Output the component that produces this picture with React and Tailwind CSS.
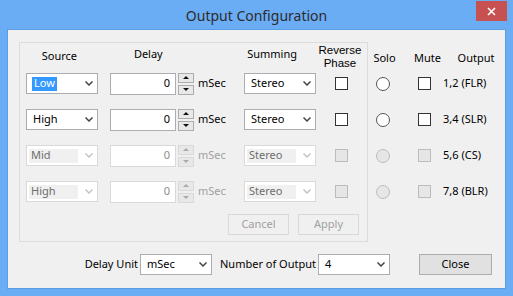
import React from "react";

const font = "font-['Noto_Sans',sans-serif]";

function Chevron({ disabled }) {
  return (
    <svg width="8" height="5" viewBox="0 0 8 5" className="shrink-0">
      <polyline
        points="0.5,0.5 4,4 7.5,0.5"
        fill="none"
        stroke={disabled ? "#c4c4c4" : "#444"}
        strokeWidth="1.5"
      />
    </svg>
  );
}

function Select({ value, width = "w-[72px]", disabled, selected }) {
  return (
    <div
      className={`${width} h-[21px] flex items-center bg-white border pr-[4px] ${
        disabled ? "border-[#d9d9d9]" : "border-[#abadb3]"
      }`}
    >
      <div className="flex-1 flex items-center pl-[2px] h-full">
        {disabled ? (
          <span className="w-[49px] h-[14px] bg-[#f0f0f0] flex items-center pl-[2px] text-[#6d6d6d]">
            {value}
          </span>
        ) : selected ? (
          <span className="h-[14px] bg-[#3399ff] text-white flex items-center px-[2px] ml-[3px]">
            {value}
          </span>
        ) : (
          <span className="pl-[4px]">{value}</span>
        )}
      </div>
      <Chevron disabled={disabled} />
    </div>
  );
}

function Spin({ disabled }) {
  const b = disabled ? "border-[#d9d9d9]" : "border-[#acacac]";
  const c = disabled ? "#a9a9a9" : "#111";
  return (
    <div className="w-[16px] h-[22px] flex flex-col justify-between">
      <div className={`h-[10px] border ${b} bg-[#e8e8e8] flex items-center justify-center`}>
        <svg width="6" height="3" viewBox="0 0 6 3">
          <polygon points="0,3 3,0 6,3" fill={c} />
        </svg>
      </div>
      <div className={`h-[10px] border ${b} bg-[#e8e8e8] flex items-center justify-center`}>
        <svg width="6" height="3" viewBox="0 0 6 3">
          <polygon points="0,0 6,0 3,3" fill={c} />
        </svg>
      </div>
    </div>
  );
}

function Check({ disabled }) {
  return (
    <div
      className={`w-[13px] h-[13px] border ${
        disabled ? "border-[#bcbcbc] bg-[#e6e6e6]" : "border-[#333] bg-white"
      }`}
    />
  );
}

function Radio({ disabled }) {
  return (
    <div
      className={`w-[14px] h-[14px] rounded-full border ${
        disabled ? "border-[#bcbcbc] bg-[#e6e6e6]" : "border-[#555] bg-white"
      }`}
    />
  );
}

const rows = [
  { source: "Low", out: "1,2 (FLR)", selected: true },
  { source: "High", out: "3,4 (SLR)" },
  { source: "Mid", out: "5,6 (CS)", disabled: true },
  { source: "High", out: "7,8 (BLR)", disabled: true },
];

export default function App() {
  return (
    <div className={`w-[513px] h-[296px] bg-[#6badf5] flex flex-col px-[7px] ${font} text-[11px] text-black`}>
      {/* title bar */}
      <div className="h-[29px] relative flex items-center justify-center">
        <span className="text-[14px] text-[#2b2b2b] pt-[2px]">Output Configuration</span>
        <div className="absolute right-[-1px] top-[1px] w-[31px] h-[20px] bg-[#c75050] flex items-center justify-center">
          <svg width="9" height="9" viewBox="0 0 9 9">
            <path d="M1 1 L8 8 M8 1 L1 8" stroke="white" strokeWidth="1.6" />
          </svg>
        </div>
      </div>

      {/* client */}
      <div className="h-[260px] border border-[#5b9de5] bg-[#f0f0f0] flex flex-col">
        <div className="flex mt-[12px] ml-[11px]">
          {/* group box */}
          <div className="w-[349px] h-[200px] border border-[#dcdcdc] flex flex-col">
            <div className="h-[30px] flex items-start pl-[6px]">
              <div className="w-[72px] text-center pt-[5px] pr-[3px]">Source</div>
              <div className="w-[96px] text-center pt-[3px] pl-[12px]">Delay</div>
              <div className="w-[50px]" />
              <div className="w-[72px] text-center pt-[3px]">Summing</div>
              <div className="w-[62px] flex flex-col items-center pl-[6px] pt-[1px] font-['Liberation_Sans',sans-serif] text-[11.5px]">
                <span className="leading-[13px]">Reverse</span>
                <span className="leading-[13px]">Phase</span>
              </div>
            </div>
            <div className="flex flex-col gap-[15px]">
              {rows.map((r, i) => (
                <div key={i} className="h-[21px] flex items-center pl-[6px]">
                  <Select value={r.source} disabled={r.disabled} selected={r.selected} />
                  <div
                    className={`ml-[12px] w-[66px] h-[22px] border bg-white flex items-center justify-end pr-[5px] ${
                      r.disabled ? "border-[#d9d9d9] bg-[#f0f0f0] text-[#8d8d8d]" : "border-[#abadb3]"
                    }`}
                  >
                    0
                  </div>
                  <div className="ml-[2px]">
                    <Spin disabled={r.disabled} />
                  </div>
                  <div className={`w-[50px] pl-[4px] ${r.disabled ? "text-[#a0a0a0]" : ""}`}>mSec</div>
                  <Select value="Stereo" disabled={r.disabled} />
                  <div className="ml-[19px]">
                    <Check disabled={r.disabled} />
                  </div>
                </div>
              ))}
            </div>
            <div className="flex justify-end gap-[9px] mt-[12px] pr-[8px]">
              <div className="w-[61px] h-[21px] border border-[#d9d9d9] bg-[#f0f0f0] text-[#a0a0a0] flex items-center justify-center">
                Cancel
              </div>
              <div className="w-[61px] h-[21px] border border-[#d9d9d9] bg-[#f0f0f0] text-[#a0a0a0] flex items-center justify-center">
                Apply
              </div>
            </div>
          </div>

          {/* right columns */}
          <div className="flex flex-col pt-[1px]">
            <div className="h-[30px] flex items-start pt-[7px]">
              <div className="w-[31px] text-center ml-[1px]">Solo</div>
              <div className="w-[24px] text-center ml-[14px]">Mute</div>
              <div className="w-[40px] text-center ml-[18px]">Output</div>
            </div>
            <div className="flex flex-col gap-[15px]">
              {rows.map((r, i) => (
                <div key={i} className="h-[21px] flex items-center">
                  <div className="ml-[8px]">
                    <Radio disabled={r.disabled} />
                  </div>
                  <div className="ml-[28px]">
                    <Check disabled={r.disabled} />
                  </div>
                  <div className="ml-[12px]">{r.out}</div>
                </div>
              ))}
            </div>
          </div>
        </div>

        {/* bottom row */}
        <div className="flex items-center mt-[12px]">
          <div className="w-[132px] text-right pr-[2px]">Delay Unit</div>
          <Select value="mSec" />
          <div className="w-[106px] text-right pr-[2px]">Number of Output</div>
          <Select value="4" />
          <div className="ml-[29px] w-[73px] h-[21px] border border-[#adadad] bg-[#e1e1e1] flex items-center justify-center">
            Close
          </div>
        </div>
      </div>
    </div>
  );
}
